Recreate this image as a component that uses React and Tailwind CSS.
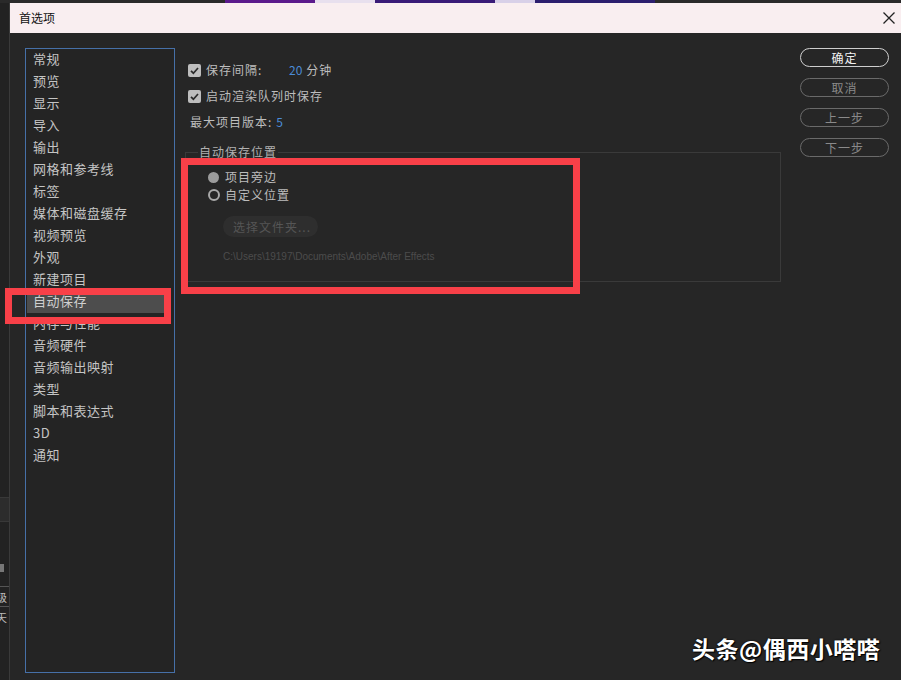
import React from "react";

const items = [
  "常规", "预览", "显示", "导入", "输出", "网格和参考线", "标签", "媒体和磁盘缓存",
  "视频预览", "外观", "新建项目", "自动保存", "内存与性能", "音频硬件", "音频输出映射",
  "类型", "脚本和表达式", "3D", "通知",
];

function Check() {
  return (
    <span className="w-[13px] h-[13px] rounded-[2px] bg-[#bdbdbd] flex items-center justify-center shrink-0">
      <svg width="11" height="11" viewBox="0 0 11 11">
        <path d="M2 5.8 L4.4 8.2 L9 3" fill="none" stroke="#2a2a2a" strokeWidth="1.7" />
      </svg>
    </span>
  );
}

function Btn({ children, primary }) {
  return (
    <div
      className={
        "h-[19px] w-[89px] rounded-full flex items-center justify-center text-[12px] tracking-[1px] " +
        (primary
          ? "border-[1.5px] border-[#cfcfcf] text-[#f2f2f2]"
          : "border-[1.5px] border-[#6a6a6a] text-[#8a8a8a]")
      }
    >
      {children}
    </div>
  );
}

export default function App() {
  return (
    <div
      className="w-[901px] h-[680px] bg-[#232323] relative overflow-hidden flex flex-col"
      style={{ fontFamily: '"Noto Sans CJK SC", "Noto Sans", sans-serif' }}
    >
      {/* top strip of background */}
      <div className="h-[3px] flex shrink-0 bg-[#2a2a2a]">
        <div className="w-[225px]" />
        <div className="w-[90px] bg-[#5b1a8c]" />
        <div className="w-[60px] bg-[#e8e0ee]" />
        <div className="w-[120px] bg-[#3a1b78]" />
        <div className="w-[40px] bg-[#d8d0e8]" />
        <div className="w-[120px] bg-[#2c1e6e]" />
      </div>
      <div className="flex flex-1">
        {/* left background strip */}
        <div className="w-[10px] shrink-0 flex flex-col border-r border-[#3a3a3a] bg-[#222]">
          <div className="h-[494px]" />
          <div className="h-[25px] bg-[#2c2c2c] border-y border-[#383838]" />
          <div className="h-[42px]" />
          <div className="h-[8px] w-[4px] bg-[#777]" />
          <div className="h-[14px]" />
          <div className="border-t border-[#555] h-[20px] overflow-hidden text-[11px] leading-[20px] text-[#bbb] -ml-[4px]">级</div>
          <div className="border-t border-[#555] h-[20px] overflow-hidden text-[11px] leading-[20px] text-[#bbb] -ml-[4px]">天</div>
        </div>
        {/* dialog */}
        <div className="flex-1 flex flex-col">
          <div className="h-[30px] bg-[#f9eef0] flex items-center justify-between pl-[9px] pr-[5px] shrink-0">
            <span className="text-[12px] text-[#111]">首选项</span>
            <svg width="14" height="14" viewBox="0 0 14 14">
              <path d="M1.5 1.5 L12.5 12.5 M12.5 1.5 L1.5 12.5" stroke="#222" strokeWidth="1.3" />
            </svg>
          </div>
          <div className="flex-1 bg-[#262626] flex items-start pt-[15px] pl-[15px]">
            {/* category list */}
            <div className="w-[150px] h-[625px] border border-[#4670a8] bg-[#242424] shrink-0">
              {items.map((t) => (
                <div
                  key={t}
                  className={
                    "h-[22px] leading-[20px] pb-[3px] flex items-center ml-[1px] mr-[8px] pl-[6px] text-[13px] tracking-[0.5px] " +
                    (t === "自动保存" ? "bg-[#4d4d4d] text-[#d0d0d0]" : "text-[#c4c4c4]")
                  }
                >
                  {t}
                </div>
              ))}
            </div>
            {/* main settings */}
            <div className="w-[596px] ml-[10px] pt-[9px] shrink-0">
              <div className="h-[26px] flex items-center pl-[3px] text-[12px] text-[#bdbdbd] tracking-[1px]">
                <Check />
                <span className="ml-[5px] w-[83px]">保存间隔:</span>
                <span className="text-[#4b8bd6] tracking-normal">20</span>
                <span className="ml-[4px]">分钟</span>
              </div>
              <div className="h-[26px] flex items-center pl-[3px] text-[12px] text-[#bdbdbd] tracking-[1px]">
                <Check />
                <span className="ml-[5px]">启动渲染队列时保存</span>
              </div>
              <div className="h-[26px] flex items-center pl-[5px] text-[12px] text-[#bdbdbd] tracking-[1px]">
                <span>最大项目版本:</span>
                <span className="ml-[4px] text-[#4b8bd6]">5</span>
              </div>
              <fieldset className="mt-[9px] border border-[#3a3a3a] px-[12px] pb-[16px]">
                <legend className="text-[12px] leading-[16px] text-[#b0b0b0] tracking-[1px] px-[1px]">自动保存位置</legend>
                <div className="pt-[8px] pl-[10px]">
                  <div className="h-[18px] flex items-center text-[12px] text-[#bdbdbd] tracking-[1px]">
                    <span className="w-[11px] h-[11px] rounded-full bg-[#9c9c9c] shrink-0" />
                    <span className="ml-[6px]">项目旁边</span>
                  </div>
                  <div className="h-[18px] flex items-center text-[12px] text-[#bdbdbd] tracking-[1px]">
                    <span className="w-[12px] h-[12px] rounded-full border-2 border-[#a8a8a8] shrink-0" />
                    <span className="ml-[5px]">自定义位置</span>
                  </div>
                  <div className="pl-[15px]">
                    <div className="mt-[12px] h-[21px] w-[95px] rounded-full bg-[#2e2e2e] flex items-center pl-[10px] text-[12px] text-[#555] tracking-[1px]">
                      选择文件夹...
                    </div>
                    <div
                      className="mt-[12px] h-[16px] leading-[16px] text-[10px] text-[#4c4c4c]"
                      style={{ fontFamily: '"Liberation Sans", sans-serif' }}
                    >
                      C:\Users\19197\Documents\Adobe\After Effects
                    </div>
                  </div>
                </div>
              </fieldset>
            </div>
            {/* buttons */}
            <div className="ml-[19px] flex flex-col gap-[11px] shrink-0">
              <Btn primary>确定</Btn>
              <Btn>取消</Btn>
              <Btn>上一步</Btn>
              <Btn>下一步</Btn>
            </div>
          </div>
        </div>
      </div>

      {/* red annotation frames */}
      <div className="absolute left-[5px] top-[288px] w-[166px] h-[36px] border-[7px] border-[#f84048]" />
      <div className="absolute left-[181px] top-[158px] w-[399px] h-[136px] border-[7px] border-[#f84048]" />

      {/* watermark */}
      <div className="absolute left-[692px] top-[632px] text-[23px] tracking-[0.5px] font-bold text-white leading-[32px] [text-shadow:1px_1px_1px_#000,0_0_2px_#000]">
        头条@偶西小嗒嗒
      </div>
    </div>
  );
}
